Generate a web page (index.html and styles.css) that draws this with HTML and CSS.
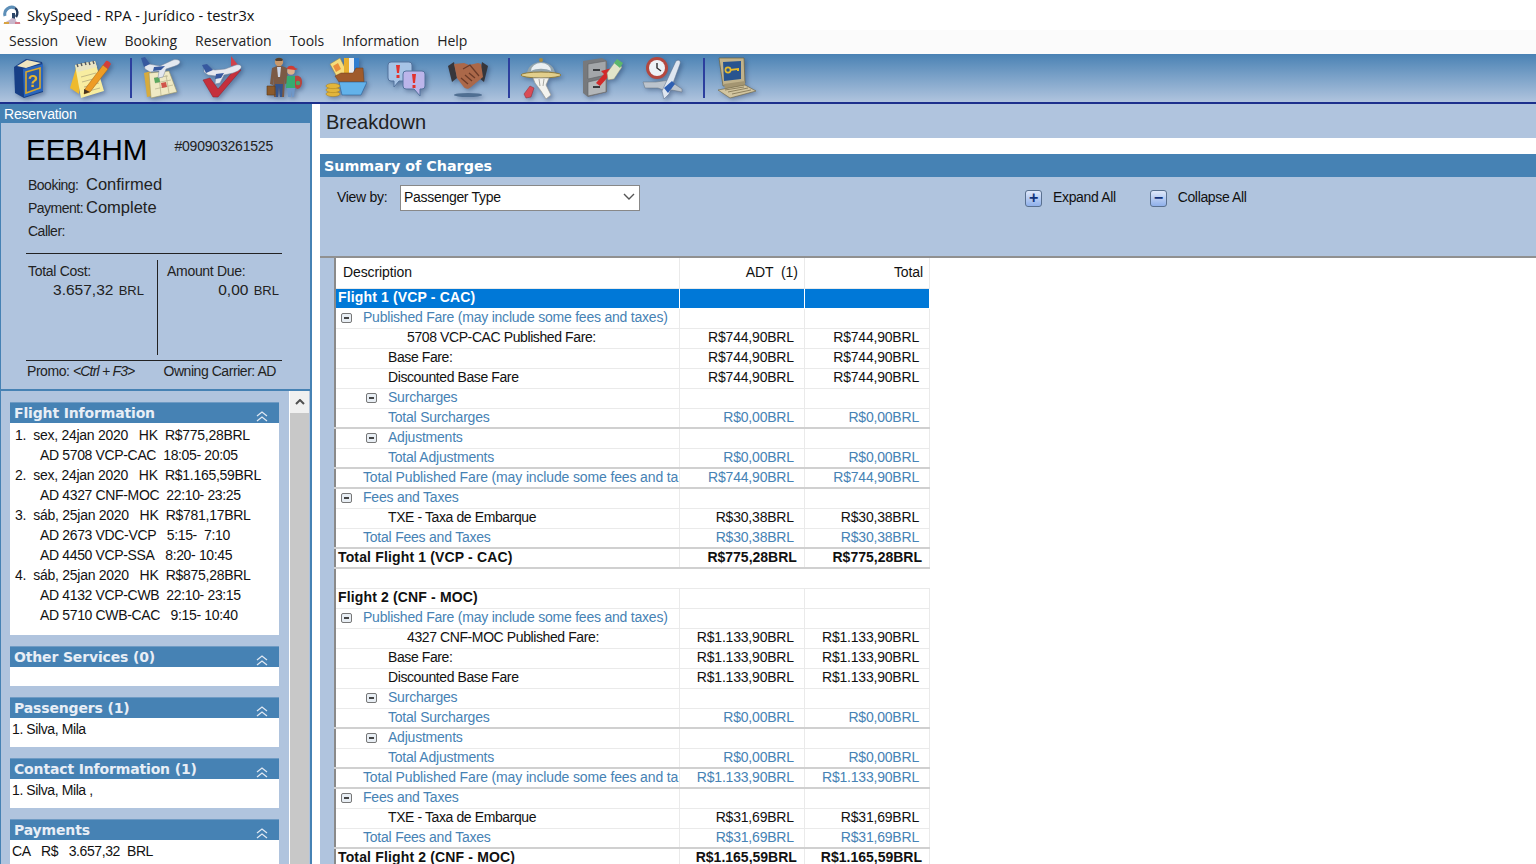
FILE: index.html
```html
<!DOCTYPE html>
<html lang="en">

<head>
    <meta charset="UTF-8">
    <meta name="viewport" content="width=device-width, initial-scale=1.0">
    <title>SkySpeed - RPA - Jurídico - testr3x</title>
    <link rel="stylesheet" href="styles.css">
</head>

<body>
    <div class="title-bar">
        <svg class="app-icon" width="22" height="22" viewBox="0 0 22 22">
            <path d="M4 12a7 7 0 0 1 10-8" fill="none" stroke="#5d8fb8" stroke-width="3" />
            <path d="M14 4c3 2 3 6 1 9" fill="none" stroke="#22395a" stroke-width="2.4" />
            <path d="M11 9h3v6h-3z" fill="#2c4668" />
            <path d="M2 20c3-3 6-3 9-6l4 1c-1 3 2 3 5 5z" fill="#c9b8cc" />
            <rect x="3" y="18" width="5" height="2" fill="#d9a441" />
            <rect x="14" y="18" width="5" height="2" fill="#d77a8a" />
        </svg>
        <span>SkySpeed - RPA - Jurídico - testr3x</span>
    </div>
    <div class="menu-bar">
        <span>Session</span>
        <span>View</span>
        <span>Booking</span>
        <span>Reservation</span>
        <span>Tools</span>
        <span>Information</span>
        <span>Help</span>
    </div>
    <div class="tool-bar">
        <!-- help book -->
        <svg class="tool" width="42" height="44" viewBox="0 0 42 44">
            <path d="M6 11 18 3l16 3 1 4v26l-19 6-9-5z" fill="#173f86" />
            <path d="M9 10 19 4l14 3-15 5z" fill="#efe6bf" />
            <path d="M15 13l20-5v27l-19 6z" fill="#2a66bd" />
            <path d="M18 16l14-4v20l-14 5z" fill="#2a5aa6" stroke="#dba92c" stroke-width="1.6" />
            <text x="25" y="31" class="tool-q">?</text>
        </svg>
        <!-- notepad -->
        <svg class="tool" width="42" height="44" viewBox="0 0 42 44">
            <path d="M1 32 8 9l5 3-3 26z" fill="#eeba2e" />
            <path d="M6 9 26 5l9 30-23 7z" fill="#f8eda0" />
            <path d="M6 9 26 5l2 6-19 5z" fill="#e9e4c4" />
            <path d="M8 8l1 3M12 7l1 3M16 6l1 3M20 6l1 3M24 5l1 3" stroke="#55585e" stroke-width="1.4" />
            <path d="M12 21l15-4M13 26l15-4M15 31l15-4M16 36l15-4" stroke="#c2b985" />
            <path d="M16 33 34 9l5 4-18 23-6 2z" fill="#ee9c24" stroke="#a9691a" stroke-width=".6" />
            <path d="M34 9l3-4c1-1 4 1 5 3l-3 5z" fill="#d33f3a" />
            <path d="M15 33l6 3-6 2z" fill="#463421" />
        </svg>
        <i class="tool-sep"></i>
        <!-- calendar and plane -->
        <svg class="tool tool-after-sep" width="42" height="44" viewBox="0 0 42 44">
            <path d="M4 17l7-2 1 25-5 1z" fill="#d7ab3d" />
            <path d="M9 17l20-2 8 21-26 6z" fill="#efe9c4" stroke="#9b9568" stroke-width=".6" />
            <path d="M14 22l14-2M15 27l16-3M15 33l18-4M19 20l2 19M26 19l3 18" stroke="#b5b08b" stroke-width=".7" />
            <path d="M14 22l5-1 1 5-5 1z" fill="#5aa85f" />
            <path d="M21 27l5-1 1 5-5 1z" fill="#d0544a" />
            <path d="M3 3l6 5 11 2 13-6c4-1 7 0 7 2s-4 4-8 5l-6 2-3 8-5 1 1-7-9 1-5-3-1-5z" fill="#e4e8ef" stroke="#76859b" stroke-width=".5" />
            <path d="M1 2l4-1 5 7-6 3z" fill="#37599f" />
            <path d="M14 11l11-1-4 4-8 1z" fill="#37599f" />
        </svg>
        <!-- confirm flight -->
        <svg class="tool" width="42" height="44" viewBox="0 0 42 44">
            <path d="M2 24l7-2 8 11 18-21 5 2-23 27h-5z" fill="#c5303c" stroke="#8d1f28" stroke-width=".5" />
            <path d="M30 0l7 9-7 1z" fill="#d0424a" />
            <path d="M3 12l11 2 10-1 11-4c4-1 6 1 5 3s-5 4-8 5l-9 2-4 8-5 1 1-8-8-1-4-3z" fill="#e6e9ef" stroke="#76859b" stroke-width=".5" />
            <path d="M1 9l5-1 6 6-7 3z" fill="#37599f" />
            <path d="M15 18l8-1-3 5-6 1z" fill="#37599f" />
        </svg>
        <!-- passengers -->
        <svg class="tool tool-people" width="42" height="44" viewBox="0 0 42 44">
            <circle cx="15" cy="6" r="4.2" fill="#c9996b" />
            <path d="M11 4c1-3 7-3 8 0l-1 1h-6z" fill="#54402e" />
            <path d="M8 12l5-2h5l5 2 1 15-3 1v-7l-1 20h-4l-1-12-1 12h-4l-1-20v8l-3-1z" fill="#7b5a45" />
            <path d="M13 11h4l-1 10h-2z" fill="#ccd6e6" />
            <path d="M11 28h8l-1 13h-2l-1-11-1 11h-2z" fill="#35548a" />
            <path d="M3 30h8v9H3z" fill="#8b5a2c" stroke="#5c3a1a" stroke-width=".6" />
            <circle cx="27" cy="15" r="3.8" fill="#dcb08c" />
            <path d="M23 13c0-4 7-4 8-1l3 1-3 1z" fill="#cf3b33" />
            <path d="M23 20h8l1 12h-10z" fill="#36ab70" />
            <path d="M23 32h8l-1 9h-2v-6l-1 6h-3z" fill="#6f97c8" />
            <path d="M31 20c4-1 7 1 7 6 0 4-2 7-5 7l-2-2z" fill="#b8443d" />
            <circle cx="34" cy="27" r="2.2" fill="#47a668" />
        </svg>
        <!-- payment -->
        <svg class="tool" width="42" height="44" viewBox="0 0 42 44">
            <path d="M5 8l10-6 7 14-10 5z" fill="#f6dd7c" stroke="#9a8744" stroke-width=".5" />
            <path d="M8 10l5-3 3 6-5 3z" fill="#ea8f3c" />
            <rect x="19" y="2" width="5" height="16" fill="#e8b02e" />
            <rect x="24" y="2" width="5" height="16" fill="#e9eef4" />
            <rect x="29" y="2" width="5" height="16" fill="#2f7ed0" />
            <path d="M10 20l6-3h12l3-5h7l1 14H14z" fill="#a05b2b" stroke="#6c3c1a" stroke-width=".5" />
            <path d="M14 26h28l-6 13H17z" fill="#63b2ea" stroke="#2d5f96" stroke-width=".6" />
            <g fill="#e3b53a" stroke="#a67e1c" stroke-width=".5">
                <ellipse cx="8" cy="38" rx="7" ry="2.6" />
                <ellipse cx="8" cy="34" rx="7" ry="2.6" />
                <ellipse cx="8" cy="30" rx="7" ry="2.6" />
            </g>
        </svg>
        <!-- messages -->
        <svg class="tool" width="42" height="44" viewBox="0 0 42 44">
            <path d="M5 6h18a3 3 0 0 1 3 3v13a3 3 0 0 1-3 3H13l-5 6v-6H5a3 3 0 0 1-3-3V9a3 3 0 0 1 3-3z" fill="#a7c4e6" stroke="#53739d" />
            <path d="M20 15h16a3 3 0 0 1 3 3v12a3 3 0 0 1-3 3h-2v7l-6-7h-8a3 3 0 0 1-3-3V18a3 3 0 0 1 3-3z" fill="#bcb5ea" stroke="#53739d" />
            <path d="M10 9h4l-1 8h-2zM10.500 19h3v3h-3zM26 18h4l-1 9h-2zM26.500 29h3v3h-3z" fill="#e2322d" />
        </svg>
        <!-- handshake -->
        <svg class="tool" width="42" height="44" viewBox="0 0 42 44">
            <ellipse cx="21" cy="39" rx="14" ry="2" fill="#506f92" />
            <path d="M1 10l6-4 3 16-5 4z" fill="#36363b" />
            <path d="M41 10l-6-4-3 16 5 4z" fill="#36363b" />
            <path d="M7 8l10-1 5 2 9-2 3 1 2 13-12 10c-3 3-6 2-8-1L10 22z" fill="#ab6849" />
            <path d="M16 13l7-4 9 11M14 22l7 6M18 19l7 6M22 17l6 5" fill="none" stroke="#6c3b28" stroke-width="1.3" />
        </svg>
        <i class="tool-sep"></i>
        <!-- service bell -->
        <svg class="tool tool-after-sep" width="42" height="44" viewBox="0 0 42 44">
            <circle cx="21" cy="4" r="2" fill="#a88c3f" />
            <path d="M7 18a14 12 0 0 1 28 0z" fill="#93a4ac" />
            <path d="M11 15a10 8 0 0 1 20 0c-5-3-15-3-20 0z" fill="#e9eff2" />
            <path d="M14 18c4-3 11-3 15 0z" fill="#45606c" />
            <ellipse cx="21" cy="19" rx="20" ry="3" fill="#e2cf8c" stroke="#8f7c40" />
            <path d="M13 22h16l-3 7 5 10-5 4-5-8-6-8z" fill="#f3f3ef" stroke="#9a9a94" stroke-width=".7" />
            <path d="M19 23l1 7M24 23l-1 7" stroke="#a8a8a2" />
            <path d="M4 38l6-8 4 2-3 9-5 1z" fill="#d94c57" stroke="#8e2a33" stroke-width=".5" />
        </svg>
        <!-- file cabinet -->
        <svg class="tool" width="42" height="44" viewBox="0 0 42 44">
            <path d="M2 5 21 2l5 3v31l-19 5-5-4z" fill="#77797c" />
            <path d="M7 8l18-3v14L7 23z" fill="#a3a6a9" stroke="#5f6164" stroke-width=".6" />
            <path d="M7 26l18-4v14L7 40z" fill="#b4b7b9" stroke="#5f6164" stroke-width=".6" />
            <rect x="12" y="13" width="7" height="2" fill="#393b3e" />
            <rect x="12" y="30" width="7" height="2" fill="#393b3e" />
            <path d="M15 27l8-9-3-3 11-3-1 12-3-3-8 9z" fill="#d22a2a" />
            <path d="M26 17l8-11 7 5-8 12-6 1z" fill="#e2e5c9" stroke="#8d9178" stroke-width=".5" />
            <path d="M33 7l3-4 6 4-3 5z" fill="#5cb76c" />
        </svg>
        <!-- clock and plane -->
        <svg class="tool" width="42" height="44" viewBox="0 0 42 44">
            <circle cx="15" cy="12" r="11" fill="#b4473e" />
            <circle cx="15" cy="12" r="8" fill="#eef2f6" />
            <path d="M15 7v5l4 3" fill="none" stroke="#2e2e2e" stroke-width="1.4" />
            <path d="M1 26h13l7-1 8-1 2 3 9 6v3l-10-2-6 1-8-3H3z" fill="#bcc4cd" stroke="#67737f" stroke-width=".5" />
            <path d="M34 5c3-2 5 0 4 3l-11 30-5 5-2-8z" fill="#dfe6f0" stroke="#5c6f88" stroke-width=".5" />
            <path d="M22 32l8-7 3 3-7 9z" fill="#2f5fb2" />
        </svg>
        <i class="tool-sep"></i>
        <!-- sign on -->
        <svg class="tool tool-after-sep" width="42" height="44" viewBox="0 0 42 44">
            <path d="M4 2h25l1 25-22 3z" fill="#c0b28b" stroke="#6c6141" stroke-width=".7" />
            <path d="M8 6l18-1v18L9 25z" fill="#28548f" />
            <circle cx="13" cy="14" r="2.6" fill="none" stroke="#e6bb2e" stroke-width="1.7" />
            <path d="M15 13l9-1v3h-2v-1l-7 1z" fill="#e6bb2e" />
            <path d="M9 28l21-3v5L10 33z" fill="#a39571" />
            <path d="M3 34l27-5 11 6-26 7z" fill="#d2c5a0" stroke="#6c6141" stroke-width=".6" />
            <path d="M10 34l19-3M13 36l20-4M17 38l19-4" stroke="#8f8260" />
        </svg>
    </div>
    <div class="main">
        <div class="sidebar">
            <div class="reservation">
                <div class="reservation-title">Reservation</div>
                <div class="reservation-body">
                    <div class="locator-row">
                        <span class="locator">EEB4HM</span>
                        <span class="locator-no">#090903261525</span>
                    </div>
                    <div class="status-row"><span class="status-label">Booking:</span><span class="status-value">Confirmed</span></div>
                    <div class="status-row"><span class="status-label">Payment:</span><span class="status-value">Complete</span></div>
                    <div class="status-row"><span class="status-label">Caller:</span></div>
                    <div class="totals">
                        <div class="total-col">
                            <div>Total Cost:</div>
                            <div class="amount">3.657,32 <small>BRL</small></div>
                        </div>
                        <div class="total-col total-col-right">
                            <div>Amount Due:</div>
                            <div class="amount">0,00 <small>BRL</small></div>
                        </div>
                    </div>
                    <div class="promo-row">
                        <span>Promo: <em>&lt;Ctrl + F3&gt;</em></span>
                        <span>Owning Carrier: AD</span>
                    </div>
                </div>
            </div>
            <div class="panels-wrap">
                <div class="panels">
                    <div class="panel">
                        <div class="panel-head">Flight Information<svg class="chev" width="12" height="12" viewBox="0 0 12 12"><path d="M1 6l5-4 5 4M1 11l5-4 5 4" /></svg></div>
                        <div class="panel-body flights">
                            <div>1.&nbsp; sex, 24jan 2020&nbsp;&nbsp; HK&nbsp; R$775,28BRL</div>
                            <div class="seg">AD 5708 VCP-CAC&nbsp; 18:05- 20:05</div>
                            <div>2.&nbsp; sex, 24jan 2020&nbsp;&nbsp; HK&nbsp; R$1.165,59BRL</div>
                            <div class="seg">AD 4327 CNF-MOC&nbsp; 22:10- 23:25</div>
                            <div>3.&nbsp; sáb, 25jan 2020&nbsp;&nbsp; HK&nbsp; R$781,17BRL</div>
                            <div class="seg">AD 2673 VDC-VCP&nbsp;&nbsp; 5:15-&nbsp; 7:10</div>
                            <div class="seg">AD 4450 VCP-SSA&nbsp;&nbsp; 8:20- 10:45</div>
                            <div>4.&nbsp; sáb, 25jan 2020&nbsp;&nbsp; HK&nbsp; R$875,28BRL</div>
                            <div class="seg">AD 4132 VCP-CWB&nbsp; 22:10- 23:15</div>
                            <div class="seg">AD 5710 CWB-CAC&nbsp;&nbsp; 9:15- 10:40</div>
                        </div>
                    </div>
                    <div class="panel">
                        <div class="panel-head">Other Services (0)<svg class="chev" width="12" height="12" viewBox="0 0 12 12"><path d="M1 6l5-4 5 4M1 11l5-4 5 4" /></svg></div>
                        <div class="panel-body other"></div>
                    </div>
                    <div class="panel">
                        <div class="panel-head">Passengers (1)<svg class="chev" width="12" height="12" viewBox="0 0 12 12"><path d="M1 6l5-4 5 4M1 11l5-4 5 4" /></svg></div>
                        <div class="panel-body short">1. Silva, Mila</div>
                    </div>
                    <div class="panel">
                        <div class="panel-head">Contact Information (1)<svg class="chev" width="12" height="12" viewBox="0 0 12 12"><path d="M1 6l5-4 5 4M1 11l5-4 5 4" /></svg></div>
                        <div class="panel-body short">1. Silva, Mila ,</div>
                    </div>
                    <div class="panel">
                        <div class="panel-head">Payments<svg class="chev" width="12" height="12" viewBox="0 0 12 12"><path d="M1 6l5-4 5 4M1 11l5-4 5 4" /></svg></div>
                        <div class="panel-body short">CA&nbsp;&nbsp; R$&nbsp;&nbsp; 3.657,32&nbsp; BRL</div>
                    </div>
                </div>
                <div class="scrollbar">
                    <div class="scroll-btn"><svg width="10" height="6" viewBox="0 0 10 6"><path d="M1 5l4-4 4 4" /></svg></div>
                </div>
            </div>
        </div>
        <div class="content">
            <div class="breakdown-title">Breakdown</div>
            <div class="summary-title">Summary of Charges</div>
            <div class="filter-bar">
                <span class="view-by">View by:</span>
                <div class="select">
                    <span>Passenger Type</span>
                    <svg width="12" height="8" viewBox="0 0 12 8"><path d="M1 1l5 5 5-5" /></svg>
                </div>
                <div class="tree-action action-expand"><i class="tree-btn">+</i>Expand All</div>
                <div class="tree-action"><i class="tree-btn">−</i>Collapse All</div>
            </div>
            <div class="table-area">
                <table class="charges">
                    <colgroup>
                        <col class="col-desc">
                        <col class="col-num">
                        <col class="col-num">
                    </colgroup>
                    <tr class="head"><td>Description</td><td>ADT&nbsp; (1)</td><td>Total</td></tr>
                    <tr class="flight selected"><td>Flight 1 (VCP - CAC)</td><td></td><td></td></tr>
                    <tr class="blue"><td class="ind1"><i class="toggle"></i>Published Fare (may include some fees and taxes)</td><td></td><td></td></tr>
                    <tr><td class="ind3">5708 VCP-CAC Published Fare:</td><td>R$744,90BRL</td><td>R$744,90BRL</td></tr>
                    <tr><td class="ind2">Base Fare:</td><td>R$744,90BRL</td><td>R$744,90BRL</td></tr>
                    <tr><td class="ind2">Discounted Base Fare</td><td>R$744,90BRL</td><td>R$744,90BRL</td></tr>
                    <tr class="blue"><td class="ind2"><i class="toggle"></i>Surcharges</td><td></td><td></td></tr>
                    <tr class="blue thick"><td class="ind2">Total Surcharges</td><td>R$0,00BRL</td><td>R$0,00BRL</td></tr>
                    <tr class="blue"><td class="ind2"><i class="toggle"></i>Adjustments</td><td></td><td></td></tr>
                    <tr class="blue thick"><td class="ind2">Total Adjustments</td><td>R$0,00BRL</td><td>R$0,00BRL</td></tr>
                    <tr class="blue thick clip"><td class="ind1">Total Published Fare (may include some fees and ta</td><td>R$744,90BRL</td><td>R$744,90BRL</td></tr>
                    <tr class="blue"><td class="ind1"><i class="toggle"></i>Fees and Taxes</td><td></td><td></td></tr>
                    <tr><td class="ind2">TXE - Taxa de Embarque</td><td>R$30,38BRL</td><td>R$30,38BRL</td></tr>
                    <tr class="blue thick"><td class="ind1">Total Fees and Taxes</td><td>R$30,38BRL</td><td>R$30,38BRL</td></tr>
                    <tr class="flight thick"><td>Total Flight 1 (VCP - CAC)</td><td>R$775,28BRL</td><td>R$775,28BRL</td></tr>
                    <tr class="spacer"><td></td><td></td><td></td></tr>
                    <tr class="flight"><td>Flight 2 (CNF - MOC)</td><td></td><td></td></tr>
                    <tr class="blue"><td class="ind1"><i class="toggle"></i>Published Fare (may include some fees and taxes)</td><td></td><td></td></tr>
                    <tr><td class="ind3">4327 CNF-MOC Published Fare:</td><td>R$1.133,90BRL</td><td>R$1.133,90BRL</td></tr>
                    <tr><td class="ind2">Base Fare:</td><td>R$1.133,90BRL</td><td>R$1.133,90BRL</td></tr>
                    <tr><td class="ind2">Discounted Base Fare</td><td>R$1.133,90BRL</td><td>R$1.133,90BRL</td></tr>
                    <tr class="blue"><td class="ind2"><i class="toggle"></i>Surcharges</td><td></td><td></td></tr>
                    <tr class="blue thick"><td class="ind2">Total Surcharges</td><td>R$0,00BRL</td><td>R$0,00BRL</td></tr>
                    <tr class="blue"><td class="ind2"><i class="toggle"></i>Adjustments</td><td></td><td></td></tr>
                    <tr class="blue thick"><td class="ind2">Total Adjustments</td><td>R$0,00BRL</td><td>R$0,00BRL</td></tr>
                    <tr class="blue thick clip"><td class="ind1">Total Published Fare (may include some fees and ta</td><td>R$1.133,90BRL</td><td>R$1.133,90BRL</td></tr>
                    <tr class="blue"><td class="ind1"><i class="toggle"></i>Fees and Taxes</td><td></td><td></td></tr>
                    <tr><td class="ind2">TXE - Taxa de Embarque</td><td>R$31,69BRL</td><td>R$31,69BRL</td></tr>
                    <tr class="blue thick"><td class="ind1">Total Fees and Taxes</td><td>R$31,69BRL</td><td>R$31,69BRL</td></tr>
                    <tr class="flight thick"><td>Total Flight 2 (CNF - MOC)</td><td>R$1.165,59BRL</td><td>R$1.165,59BRL</td></tr>
                </table>
            </div>
        </div>
    </div>
</body>

</html>
```

FILE: styles.css
```css
* {
    margin: 0;
    padding: 0;
    box-sizing: border-box;
}

html,
body {
    height: 100%;
    overflow: hidden;
}

body {
    display: flex;
    flex-direction: column;
    background-color: white;
    font-family: "Liberation Sans", Arial, sans-serif;
    font-size: 14px;
    color: #111;
}

.title-bar {
    height: 30px;
    display: flex;
    align-items: center;
    gap: 4px;
    padding: 0 0 1px 1px;
    font-family: "Open Sans", sans-serif;
    font-size: 14.6px;
}

.menu-bar {
    height: 24px;
    display: flex;
    align-items: center;
    gap: 18px;
    padding: 0 0 3px 9px;
    background-color: #fbfbfb;
    font-family: "Open Sans", sans-serif;
    font-size: 14px;
    letter-spacing: -.05px;
    color: #222;
}

.tool-bar {
    height: 50px;
    display: flex;
    align-items: center;
    background: linear-gradient(#4a82b4, #b0c4de);
    border-bottom: 2px solid #1c2f8c;
    padding-left: 8px;
}

.tool {
    margin-right: 19px;
    flex-shrink: 0;
    filter: drop-shadow(2px 2px 2px rgba(30, 50, 90, .4));
}

.tool-after-sep {
    margin-left: 0;
}

.tool-people {
    margin-left: 2px;
}

.tool-q {
    font-family: "Liberation Sans", sans-serif;
    font-size: 17px;
    font-weight: bold;
    fill: #e9b52f;
    text-anchor: middle;
}

.tool-sep {
    width: 2px;
    height: 40px;
    background-color: #2c3f9e;
    margin-right: 8px;
    flex-shrink: 0;
}

.tool-sep ~ .tool-sep + .tool-after-sep {
    margin-left: 2px;
}

.main {
    flex: 1;
    display: flex;
    min-height: 0;
}

.sidebar {
    width: 312px;
    display: flex;
    flex-direction: column;
    flex-shrink: 0;
    border-right: 2px solid #4682b4;
    border-left: 1px solid #4682b4;
}

.reservation {
    height: 287px;
    border-bottom: 2px solid #4682b4;
    display: flex;
    flex-direction: column;
}

.reservation-title {
    height: 19px;
    background-color: #4682b4;
    color: white;
    padding-left: 3px;
    line-height: 20px;
    letter-spacing: -.2px;
}

.reservation-body {
    flex: 1;
    background-color: #b0c4de;
    padding: 0 28px 0 25px;
    color: #222;
}

.locator-row {
    height: 50px;
    display: flex;
    align-items: center;
    justify-content: space-between;
    padding-top: 4px;
    padding-right: 9px;
}

.locator {
    font-size: 29.500px;
    color: #000;
}

.locator-no {
    font-size: 14px;
    margin-top: -8px;
    letter-spacing: -.2px;
}

.status-row {
    height: 23px;
    display: flex;
    align-items: center;
    font-size: 14px;
    letter-spacing: -.5px;
}

.status-label {
    width: 60px;
    padding-left: 2px;
    flex-shrink: 0;
}

.status-value {
    font-size: 16.500px;
    letter-spacing: 0;
}

.totals {
    margin-top: 11px;
    height: 108px;
    border-top: 1px solid #222;
    border-bottom: 1px solid #222;
    display: grid;
    grid-template-columns: 131px 1fr;
    padding-top: 6px;
    font-size: 14px;
    letter-spacing: -.3px;
}

.total-col {
    padding: 3px 13px 0 2px;
    height: 95px;
}

.total-col-right {
    border-left: 1px solid #222;
    padding: 3px 3px 0 9px;
}

.amount {
    text-align: right;
    font-size: 15.500px;
    letter-spacing: 0;
    margin-top: 2px;
}

.amount small {
    font-size: 13px;
    margin-left: 1px;
}

.promo-row {
    display: flex;
    justify-content: space-between;
    padding: 2px 6px 0 1px;
    font-size: 14px;
    letter-spacing: -.45px;
}

.promo-row em {
    letter-spacing: -.8px;
}

.panels-wrap {
    flex: 1;
    display: flex;
    min-height: 0;
    background-color: #b0c4de;
}

.panels {
    width: 288px;
    padding: 11px 10px 0 9px;
    display: flex;
    flex-direction: column;
    gap: 11px;
    overflow: hidden;
}

.panel {
    flex-shrink: 0;
}

.panel-head {
    height: 21px;
    background-color: #4682b4;
    color: #e8eef6;
    font-family: "DejaVu Sans", sans-serif;
    font-size: 14px;
    font-weight: bold;
    line-height: 20px;
    letter-spacing: -.15px;
    padding-left: 4px;
    position: relative;
    border-top: 1px solid #6f9bc4;
}

.chev {
    position: absolute;
    right: 11px;
    top: 7px;
}

.chev path {
    fill: none;
    stroke: #dfe8f2;
    stroke-width: 1.3;
}

.panel-body {
    background-color: white;
    padding-left: 2px;
    line-height: 23px;
    font-size: 14px;
    letter-spacing: -.4px;
}

.flights {
    height: 212px;
    padding: 2px 0 0 5px;
    line-height: 20px;
    letter-spacing: -.28px;
}

.seg {
    padding-left: 25px;
    letter-spacing: -.35px;
}

.other {
    height: 19px;
}

.short {
    height: 29px;
}

.scrollbar {
    width: 20px;
    flex-shrink: 0;
    background-color: #c8c8c8;
    border-left: 1px solid white;
}

.scroll-btn {
    height: 22px;
    background-color: #f0f0f0;
    display: flex;
    align-items: center;
    justify-content: center;
}

.scroll-btn path {
    fill: none;
    stroke: #505050;
    stroke-width: 2;
}

.content {
    flex: 1;
    min-width: 0;
    padding-left: 8px;
    display: flex;
    flex-direction: column;
}

.breakdown-title {
    height: 34px;
    background-color: #b0c4de;
    font-size: 20px;
    line-height: 36px;
    padding-left: 6px;
    color: #222;
    flex-shrink: 0;
}

.summary-title {
    height: 23px;
    margin-top: 16px;
    background-color: #4682b4;
    color: white;
    font-family: "DejaVu Sans", sans-serif;
    font-size: 14.300px;
    font-weight: bold;
    line-height: 25px;
    padding-left: 4px;
    flex-shrink: 0;
}

.filter-bar {
    height: 81px;
    background-color: #b0c4de;
    display: flex;
    align-items: flex-start;
    padding: 8px 0 0 17px;
    border-bottom: 2px solid #909090;
    flex-shrink: 0;
    letter-spacing: -.3px;
}

.view-by {
    width: 63px;
    line-height: 24px;
}

.select {
    width: 240px;
    height: 26px;
    background-color: white;
    border: 1px solid #888;
    display: flex;
    align-items: center;
    justify-content: space-between;
    padding: 0 4px 2px 3px;
}

.select path {
    fill: none;
    stroke: #555;
    stroke-width: 1.4;
}

.tree-action {
    display: flex;
    align-items: center;
    height: 26px;
    margin-left: 34px;
    padding-bottom: 2px;
    letter-spacing: -.35px;
}

.action-expand {
    margin-left: 385px;
}

.tree-btn {
    width: 17px;
    height: 17px;
    border: 1px solid #59708f;
    border-radius: 3px;
    background: linear-gradient(#dfe8fa, #8fb0ea);
    color: #12327a;
    font-style: normal;
    font-weight: bold;
    font-size: 16px;
    line-height: 14px;
    text-align: center;
    margin: 2px 11px 0 0;
}

.table-area {
    flex: 1;
    min-height: 0;
    border-left: 14px solid #b0c4de;
    overflow: hidden;
}

.charges {
    width: 596px;
    border-collapse: collapse;
    table-layout: fixed;
    border-left: 2px solid #8a8a8a;
}

.col-desc {
    width: 344px;
}

.col-num {
    width: 125px;
}

.charges td {
    height: 20px;
    border: 1px solid #eaeaea;
    padding: 0 10px 2px 0;
    text-align: right;
    white-space: nowrap;
    overflow: hidden;
    letter-spacing: -.2px;
}

.charges td:first-child {
    text-align: left;
    padding: 0 0 2px 2px;
    border-left: none;
    letter-spacing: -.4px;
}

.charges .head td {
    height: 30px;
    border-top: none;
    padding-right: 6px;
    letter-spacing: -.1px;
}

.charges .head td:first-child {
    padding-left: 7px;
}

.selected td {
    background-color: #0078d7;
    color: white;
    border-color: white;
}

.charges .flight td {
    font-weight: bold;
    padding-right: 7px;
    letter-spacing: 0;
}

.charges .flight td:first-child {
    letter-spacing: .15px;
}

.blue td {
    color: #4682b4;
}

.charges .blue td:first-child {
    letter-spacing: -.22px;
}

.charges .clip td:first-child {
    letter-spacing: -.14px;
}

.thick td {
    border-bottom: 2px solid #d0d0d0;
}

.charges .spacer td {
    border-left: none;
    border-right: none;
}

.charges td.ind1 {
    padding-left: 27px;
    position: relative;
}

.charges td.ind2 {
    padding-left: 52px;
    position: relative;
}

.charges td.ind3 {
    padding-left: 71px;
}

.toggle {
    position: absolute;
    width: 11px;
    height: 10px;
    top: 4px;
    left: 5px;
    border: 1px solid #777;
    border-radius: 2px;
    background-color: #e8eef4;
}

.ind2 .toggle {
    left: 30px;
}

.toggle::after {
    content: "";
    position: absolute;
    left: 2px;
    right: 2px;
    top: 3px;
    height: 2px;
    background-color: #444;
}
```
